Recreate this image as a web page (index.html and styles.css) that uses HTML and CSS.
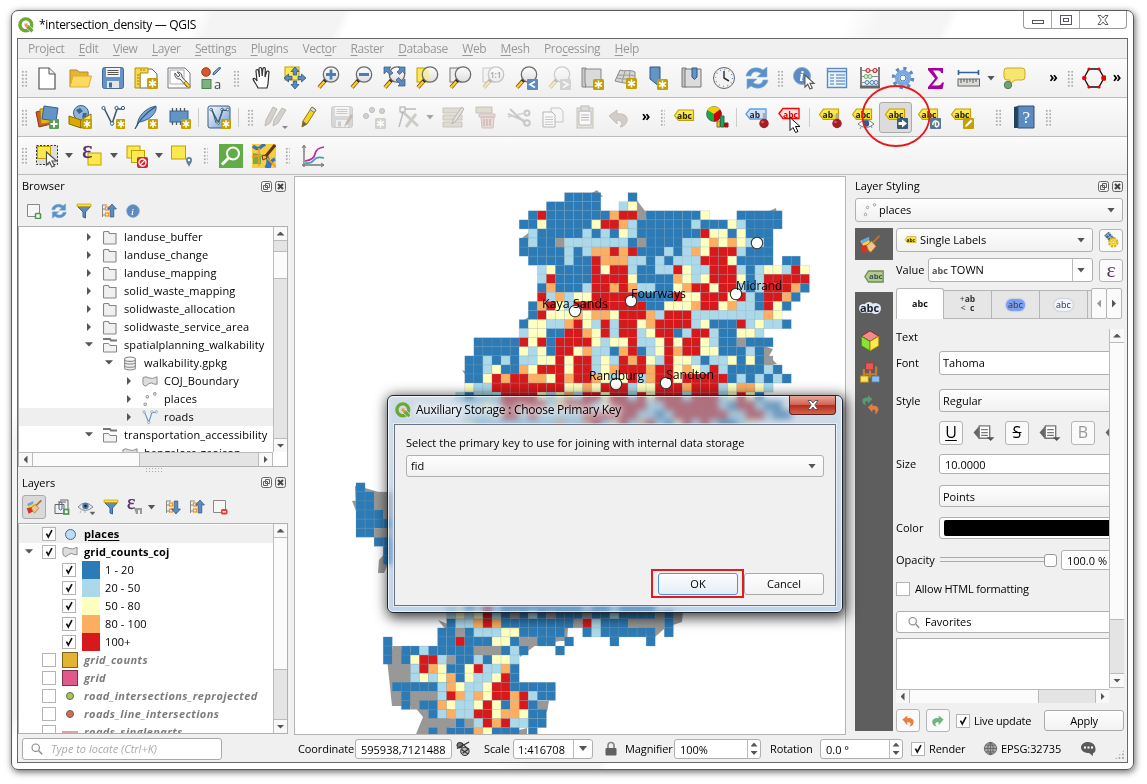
FILE: index.html
```html
<!DOCTYPE html>
<html lang="en">
<head>
<meta charset="utf-8">
<title>*intersection_density — QGIS</title>
<link rel="stylesheet" href="styles.css">
</head>
<body>
<svg class="sprite" aria-hidden="true">
<defs>
<linearGradient id="glass" x2="0" y2="1"><stop offset="0" stop-color="#fff"/><stop offset="1" stop-color="#ddd"/></linearGradient>
<linearGradient id="steel" x2="1" y2="1"><stop offset="0" stop-color="#fff"/><stop offset="1" stop-color="#6d9bcb"/></linearGradient>
<symbol id="star" viewBox="0 0 11 11"><rect width="11" height="11" rx="1.500" fill="#c4a000"/><path d="M5.500 1.500v8M2 3.500l7 4M9 3.500l-7 4" stroke="#fff" stroke-width="1.600"/></symbol>
<symbol id="q" viewBox="0 0 16 16"><circle cx="7.800" cy="7.800" r="5.900" fill="none" stroke="#6ca832" stroke-width="3.400"/><path d="M8 8h3.200l4.600 5.200-2.400 2.600L8 11z" fill="#6ca832" stroke="#fff" stroke-width=".6"/><path d="M6.500 6.500h3.200L9.200 8l1.400 1.500L9 10.500 6.600 9z" fill="#f0953c"/></symbol>
<symbol id="lens" viewBox="0 0 24 24"><path d="M9.500 14L3 21.500" stroke="#7a5500" stroke-width="4"/><path d="M8.500 15.500L3 21.500" stroke="#fccb3c" stroke-width="2.400"/><path d="M10.500 13L8.500 15.500" stroke="#222" stroke-width="3.500"/><circle cx="15" cy="8.500" r="7.700" fill="url(#glass)" stroke="#6c6c6c" stroke-width="1.300"/></symbol>
<symbol id="tag" viewBox="0 0 21 13"><path d="M1 6.500L5 1h15v10.500H5z" fill="#fce94f" stroke="#c4a000" stroke-width="1.200"/><path d="M3 7h16v4H5z" fill="#edd400" opacity=".8"/></symbol>
<symbol id="i-new" viewBox="0 0 24 24"><path d="M4 2h10l6 6v15H4z" fill="#fff" stroke="#555" stroke-width="1.200"/><path d="M14 2v6h6" fill="#eee" stroke="#555"/></symbol>
<symbol id="i-open" viewBox="0 0 24 24"><path d="M2 21V4h7l2 2h9v4" fill="#e3b536" stroke="#b88a1a"/><path d="M2 21L5 10h18.500l-3 11z" fill="#fcd960" stroke="#dcae30"/></symbol>
<symbol id="i-save" viewBox="0 0 24 24"><rect x="1.500" y="1.500" width="21" height="21" rx="2" fill="#6493c6" stroke="#476b94"/><path d="M5 2h14v9H5z" fill="#f2f2f2"/><path d="M6.500 4.500h11M6.500 6.500h11M6.500 8.500h11" stroke="#555"/><path d="M6 15h12v7H6z" fill="#e5e5e5"/><path d="M8 16.500h3v5H8z" fill="#476b94"/></symbol>
<symbol id="i-layout" viewBox="0 0 24 24"><path d="M6 3h12l5 5v14H6z" fill="#fff" stroke="#666"/><path d="M1 2h13v5H6v15H1z" fill="#f7d94d" stroke="#b5900c"/><path d="M3 9h2M3 12h2M3 15h2M3 18h2M7 3v2M10 3v2" stroke="#a07c00"/><use href="#star" x="13" y="12" width="11" height="11"/></symbol>
<symbol id="i-manager" viewBox="0 0 24 24"><path d="M1 2h17l5 5v15H1z" fill="#fff" stroke="#777"/><path d="M3 4h14v14H3z" fill="none" stroke="#aab"/><path d="M8 7a4.500 4.500 0 0 0 5 6l7 8 2-2-7-8a4.500 4.500 0 0 0-5-5l3 3-2 2z" fill="#eee" stroke="#555"/><path d="M17 17l4.500 5 2-2-4.500-5z" fill="#f5d14a" stroke="#a07c00"/></symbol>
<symbol id="i-style" viewBox="0 0 24 24"><circle cx="6" cy="6" r="4.300" fill="#d4572e" stroke="#a03a18"/><path d="M13 9l2-1 6-6-2-.5-5.500 5z" fill="#7fa8d6" stroke="#35628f"/><rect x="2" y="13.500" width="9" height="9" fill="#7fb183" stroke="#4d8052"/><text x="14" y="22.500" class="t-a">a</text></symbol>
<symbol id="i-hand" viewBox="0 0 24 24"><path d="M8 22c-1-3-4-6-5-9 1-1.500 3 0 4 2L6 5c0-2 2-2 2.500 0l1 6L9 3c0-2 2.500-2 2.700 0l.5 7 .6-7c.2-2 2.600-1.800 2.500 0L15 11l1.500-5c.6-1.700 2.800-1 2.500.6C18 12 19 17 17 22z" fill="#fff" stroke="#333" stroke-width="1.200"/></symbol>
<symbol id="i-pansel" viewBox="0 0 24 24"><rect x="2" y="1" width="14" height="13" fill="#fce94f" stroke="#c4a000"/><path d="M12 1l4 4.500h-2.300V9h-3.400V5.500H8zM12 23l4-4.500h-2.300V15h-3.400v3.500H8zM1 12l4.500-4v2.300H9v3.400H5.500V16zM23 12l-4.500-4v2.300H15v3.400h3.500V16z" fill="#5b8bc0" stroke="#2f5682" stroke-width=".8"/></symbol>
<symbol id="i-zin" viewBox="0 0 24 24"><use href="#lens" width="24" height="24"/><path d="M15 3.500v10M10 8.500h10" stroke="#4a7db3" stroke-width="2.800"/></symbol>
<symbol id="i-zout" viewBox="0 0 24 24"><use href="#lens" width="24" height="24"/><path d="M10 8.500h10" stroke="#4a7db3" stroke-width="2.800"/></symbol>
<symbol id="i-zfull" viewBox="0 0 24 24"><use href="#lens" width="24" height="24"/><path d="M2 1h7L7 3l4 4-2.500 2L4.500 5.500 2 8zM23 1h-7l2 2-3 3 2.500 2.500 3-3L23 8zM23 20h-7l2-2-4-4 2.500-2.500 4 4L23 13z" fill="#5b8bc0" stroke="#2f5682" stroke-width=".7"/></symbol>
<symbol id="i-zsel" viewBox="0 0 24 24"><rect x="2" y="2" width="12" height="14" fill="#fce94f" stroke="#c4a000"/><use href="#lens" width="24" height="24"/><path d="M9 4h5v11c-5-1-7-6-5-11z" fill="#fce94f" opacity=".45"/></symbol>
<symbol id="i-zlay" viewBox="0 0 24 24"><rect x="2" y="2" width="12" height="14" fill="#eee" stroke="#777"/><use href="#lens" width="24" height="24"/></symbol>
<symbol id="i-z11" viewBox="0 0 24 24"><g opacity=".35"><rect x="2" y="2" width="12" height="14" fill="#eee" stroke="#777"/><use href="#lens" width="24" height="24"/><text x="9" y="12" class="t-s">1:1</text></g></symbol>
<symbol id="i-zlast" viewBox="0 0 24 24"><use href="#lens" width="24" height="24"/><rect x="13" y="13" width="11" height="11" rx="1" fill="#5b8bc0"/><path d="M21 15.500l-5 3 5 3" stroke="#fff" stroke-width="1.800" fill="none"/></symbol>
<symbol id="i-znext" viewBox="0 0 24 24"><g opacity=".3"><use href="#lens" width="24" height="24"/><rect x="13" y="13" width="11" height="11" rx="1" fill="#888"/><path d="M16 15.500l5 3-5 3" stroke="#fff" stroke-width="1.800" fill="none"/></g></symbol>
<symbol id="i-map" viewBox="0 0 24 24"><path d="M2 2h4v19h-4z" fill="#c9c9c9" stroke="#888"/><path d="M5 3h16v18H5q2-2 0-4z" fill="#dadada" stroke="#888"/><use href="#star" x="13" y="13" width="11" height="11"/></symbol>
<symbol id="i-3d" viewBox="0 0 24 24"><path d="M7 4c5 2 10-1 15 2v11c-6 1-13 0-20-2z" fill="#d6d6d6" stroke="#8a8a8a"/><path d="M5 9c6 1 11-1 17 1M4 12c6 2 12 0 18 2M12 5L9 16M17 4l-1 12" stroke="#999" fill="none"/><use href="#star" x="13" y="12" width="11" height="11"/></symbol>
<symbol id="i-bm" viewBox="0 0 24 24"><path d="M4 1h10v20l-5-4-5-4z" fill="#6493c6" stroke="#2f5682"/><use href="#star" x="11" y="13" width="11" height="11"/></symbol>
<symbol id="i-bms" viewBox="0 0 24 24"><path d="M3 2h4v19H3z" fill="#c4c4c4" stroke="#777"/><path d="M6 3h16v18H6z" fill="#dcdcdc" stroke="#777"/><path d="M13 2h5v9l-2.500 2.500L13 11z" fill="#6493c6" stroke="#2f5682"/></symbol>
<symbol id="i-clock" viewBox="0 0 24 24"><circle cx="12" cy="12" r="10.500" fill="#f3f3f3" stroke="#666"/><circle cx="12" cy="12" r="8.500" fill="none" stroke="#6493c6" stroke-width="1.300" stroke-dasharray="1 3.450"/><path d="M12 5v7l5 3" stroke="#333" stroke-width="1.500" fill="none"/></symbol>
<symbol id="i-ref" viewBox="0 0 24 24"><path d="M1 10C2 3 11-1 18 4l4-3v10H12l4-3.500C12 5 7 5 6 10zM23 14c-1 7-10 11-17 6l-4 3V13h10l-4 3.500c4 2.500 9 2.500 10-2.500z" fill="#5b91c9" stroke="#82aedb" stroke-width=".6"/></symbol>
<symbol id="arrow" viewBox="0 0 13 17"><path d="M1 1v13l3-3 2.500 5 2.500-1-2.500-5H11z" fill="#fff" stroke="#555" stroke-width="1.200"/></symbol>
<symbol id="i-info" viewBox="0 0 24 24"><circle cx="10" cy="10" r="8.500" fill="#5b8bc0" stroke="#8cacd0"/><text x="7.500" y="15" class="t-i">i</text><use href="#arrow" x="12" y="8" width="12" height="16"/></symbol>
<symbol id="i-circinfo" viewBox="0 0 24 24"><circle cx="12" cy="12" r="11" fill="#5b8bc0" stroke="#8cacd0"/><text x="9" y="18" class="t-i">i</text></symbol>
<symbol id="i-table" viewBox="0 0 24 24"><rect x="2.500" y="2.500" width="19" height="19" fill="#eaf2fc" stroke="#5b8bc0" stroke-width="1.400"/><path d="M3 5.500h18" stroke="#5b8bc0" stroke-width="1.500"/><path d="M5 9h4M5 12h4M5 15h4M5 18h4M11 9h9M11 12h9M11 15h9M11 18h9" stroke="#78a3d4" stroke-width="1.500"/></symbol>
<symbol id="i-aba" viewBox="0 0 24 24"><path d="M3 1v20M21 1v20" stroke="#555" stroke-width="1.500"/><path d="M2 21h20" stroke="#666" stroke-width="3"/><path d="M3 4.500h18M3 10.500h18M3 16.500h18" stroke="#888"/><g fill="#f5d0d0" stroke="#cc3030" stroke-width="1.200"><circle cx="10" cy="4.500" r="2"/><circle cx="17" cy="4.500" r="2"/></g><g fill="#d8f0d4" stroke="#6ab06a"><circle cx="8" cy="10.500" r="2"/><circle cx="12" cy="10.500" r="2"/></g><g fill="#d6e8fa" stroke="#4a7db3"><circle cx="9" cy="16.500" r="2"/><circle cx="14" cy="16.500" r="2"/><circle cx="18" cy="16.500" r="2"/></g></symbol>
<symbol id="i-gear" viewBox="0 0 24 24"><circle cx="12" cy="12" r="9" fill="none" stroke="#5b8bc0" stroke-width="4.500" stroke-dasharray="3 4.070"/><circle cx="12" cy="12" r="5.800" fill="none" stroke="#79a9df" stroke-width="4.500"/><circle cx="12" cy="12" r="3" fill="#f4f4f4" stroke="#4a7db3"/></symbol>
<symbol id="i-sum" viewBox="0 0 24 24"><path d="M4 2h15v5h-2q0-2.500-3-2.500H9L14 12l-6 7.500h6q3 0 4-3h2L18.500 23H4v-2l7-8.500L4 4z" fill="#a8009c"/></symbol>
<symbol id="i-meas" viewBox="0 0 24 24"><path d="M1 6.500h21M1.500 4v5M21.500 4v5" stroke="#35628f" stroke-width="1.600"/><rect x="1" y="13" width="21.500" height="7" fill="#dcdcd4" stroke="#666"/><path d="M4 13v4M7 13v3M10 13v4M13 13v3M16 13v4M19 13v3" stroke="#555"/></symbol>
<symbol id="i-tip" viewBox="0 0 24 24"><path d="M5 2h15q3 0 3 3v6q0 3-3 3h-7l-6 5 1-5H5q-3 0-3-3V5q0-3 3-3z" fill="#f7e571" stroke="#cfa91e"/><circle cx="6" cy="19" r="3.700" fill="#73a077" stroke="#4d8052"/></symbol>
<symbol id="i-hex" viewBox="0 0 24 24"><path d="M7 3h10l5 9-5 9H7l-5-9z" fill="none" stroke="#111" stroke-width="1.300"/><g fill="#e00"><circle cx="7" cy="3" r="1.600"/><circle cx="17" cy="3" r="1.600"/><circle cx="22" cy="12" r="2.800"/><circle cx="17" cy="21" r="1.600"/><circle cx="7" cy="21" r="1.600"/><circle cx="2.300" cy="12" r="2.300"/></g></symbol>
<symbol id="i-src" viewBox="0 0 24 24"><path d="M1 7l12-3 3 15-12 3z" fill="#d4572e" stroke="#8b3a10"/><path d="M5 4l13-1 1 14-13 2z" fill="#e8b81a" stroke="#a98408"/><path d="M9 1l14 2-2 13-14-2z" fill="#6493c6" stroke="#35628f"/><rect x="14" y="14" width="10" height="10" rx="1" fill="#5b9c5e"/><path d="M19 15.500v7M15.500 19h7" stroke="#fff" stroke-width="1.800"/></symbol>
<symbol id="i-pkg" viewBox="0 0 24 24"><circle cx="13" cy="8" r="7.500" fill="#8fb5dd" stroke="#35628f"/><path d="M8 5l4-2 3 3-4 3zM15 8l4 0-1 4-4 1z" fill="#44648c"/><path d="M1 11l12 4v8L1 19z" fill="#d9ab00" stroke="#8a6b00"/><path d="M13 15l10-6v8l-10 6z" fill="#fce94f" stroke="#8a6b00"/><use href="#star" x="14" y="14" width="10" height="10"/></symbol>
<symbol id="i-shp" viewBox="0 0 24 24"><path d="M3 3l8 16 5-15h6" fill="none" stroke="#3b5a73" stroke-width="1.600"/><g fill="#fff" stroke="#3b5a73"><circle cx="2.500" cy="3" r="1.600"/><circle cx="15.500" cy="3" r="1.600"/><circle cx="22" cy="3" r="1.600"/><circle cx="11" cy="18.500" r="1.700"/></g></symbol>
<symbol id="i-line" viewBox="0 0 24 24"><path d="M3 3l7 17 5-16h6" fill="none" stroke="#6f95bb" stroke-width="1.800"/><g fill="#fff" stroke="#5b8bc0"><circle cx="2.500" cy="3" r="1.900"/><circle cx="15" cy="3" r="1.900"/><circle cx="22" cy="3" r="1.900"/><circle cx="10" cy="20" r="1.900"/></g></symbol>
<symbol id="i-newshp" viewBox="0 0 24 24"><use href="#i-shp" width="24" height="24"/><use href="#star" x="15" y="14" width="10" height="10"/></symbol>
<symbol id="i-feath" viewBox="0 0 24 24"><path d="M3 21C4 10 12 3 22 1c1 5-3 13-16 16" fill="#78a5d8" stroke="#35628f"/><path d="M1 24C5 15 12 8 21 2" stroke="#3b5a73" stroke-width="1.300" fill="none"/><use href="#star" x="14" y="14" width="10" height="10"/></symbol>
<symbol id="i-chip" viewBox="0 0 24 24"><path d="M5.500 3v17M9.500 3v17M13.500 3v17M17.500 3v17" stroke="#555" stroke-width="1.300"/><rect x="3" y="6" width="18" height="11" fill="#6493c6" stroke="#35628f"/><use href="#star" x="14" y="14" width="10" height="10"/></symbol>
<symbol id="i-virt" viewBox="0 0 24 24"><rect x="1" y="1" width="22" height="22" rx="2" fill="url(#steel)" stroke="#3b5a8a"/><g transform="translate(2 2) scale(.85)"><use href="#i-shp" width="24" height="24"/></g><path d="M5 4l4 14M16 4l-5 14" stroke="#3b5a73"/><use href="#star" x="14" y="14" width="10" height="10"/></symbol>
<symbol id="pen" viewBox="0 0 24 24"><path d="M5 22l1-6L15 2l4 3-9 14z" fill="#f2d52b" stroke="#947600"/><path d="M5 22l1-6 4 3z" fill="#666"/><path d="M15 2l4 3-2 2.500-4-3z" fill="#ddd" stroke="#777"/></symbol>
<symbol id="i-pens" viewBox="0 0 24 24"><g fill="#d4d0cc" stroke="#bfbbb6"><path d="M1 21l1-6L9 2l4 2-7 14z"/><path d="M9 21l1-6L18 3l4 2-8 13z"/></g><path d="M18 21h6l-3 3z" fill="#888"/></symbol>
<symbol id="i-gsave" viewBox="0 0 24 24"><g opacity=".28" filter="grayscale(1)"><use href="#i-save" width="24" height="24"/></g><path d="M14 22l2-5 5-8 2 2-5 8z" fill="#c9b8b0"/></symbol>
<symbol id="i-pts" viewBox="0 0 24 24"><g fill="#d2d2d2" stroke="#bbb"><circle cx="9" cy="5" r="2.500"/><circle cx="19" cy="6" r="2.500"/><circle cx="3" cy="11" r="2.500"/></g><rect x="12" y="13" width="11" height="11" rx="1.500" fill="#d3d1c9"/><path d="M17.500 14.500v8M14 16.500l7 4M21 16.500l-7 4" stroke="#fff" stroke-width="1.500"/></symbol>
<symbol id="i-vert" viewBox="0 0 24 24"><path d="M3 22L8 4h12M6 4v5" stroke="#bbb" stroke-width="1.400" fill="none"/><path d="M8 8l14 13M10 22L20 9" stroke="#ceccc7" stroke-width="3"/><rect x="4" y="2" width="5" height="5" fill="#f3f3f3" stroke="#aaa"/></symbol>
<symbol id="i-rows" viewBox="0 0 24 24"><path d="M2 3h19v5H2zM2 10h19v5H2zM2 17h19v5H2z" fill="#dedcd2" stroke="#c8c6bd"/><path d="M11 19l2-6 8-11 2 2-8 12z" fill="#e3e1dc" stroke="#b5b5b5"/></symbol>
<symbol id="i-trash" viewBox="0 0 24 24"><path d="M2 2h16v6H2z" fill="#dedbd0" stroke="#c5c2b8"/><path d="M5 9h16v3H5zM7 12h13l-1 11H8z" fill="#e9dad8" stroke="#d3bfbd"/><path d="M10 14v7M13 14v7M16 14v7" stroke="#cdb4b2" stroke-width="1.300"/></symbol>
<symbol id="i-cut" viewBox="0 0 24 24"><path d="M1 9l17 7M3 4l14 13" stroke="#c8c8c8" stroke-width="2"/><g fill="none" stroke="#c8c8c8" stroke-width="2"><circle cx="20" cy="8" r="2.500"/><circle cx="20" cy="18" r="2.800"/></g><path d="M1 12l17-4" stroke="#d3d3d3" stroke-width="1.500"/></symbol>
<symbol id="i-copy" viewBox="0 0 24 24"><path d="M11 3h9l3 3v11H11z" fill="#f5f5f5" stroke="#c5c5c5"/><path d="M3 7h9l3 3v12H3z" fill="#f9f9f9" stroke="#b5b5b5"/><path d="M5 12h8M5 14.500h8M5 17h8M5 19.500h8" stroke="#c5c5c5"/></symbol>
<symbol id="i-paste" viewBox="0 0 24 24"><rect x="4" y="3" width="16" height="20" fill="#e4e2da" stroke="#c5c3ba"/><path d="M6 6h12v14H6z" fill="#fafafa" stroke="#bbb"/><path d="M8 10h8M8 12.500h8M8 15h8" stroke="#b5b5b5"/><rect x="8" y="1" width="8" height="5" fill="#ddd" stroke="#bbb"/></symbol>
<symbol id="i-undo" viewBox="0 0 24 24"><path d="M3 11l8-6v4c8-1 11 3 10 7s-5 6-7 6c3-3 2-7-3-7v4z" fill="#d3cdc8" stroke="#c5bfba"/></symbol>
<symbol id="i-abc" viewBox="0 0 24 24"><use href="#tag" x="1" y="4" width="22" height="13"/><text x="5" y="14" class="t-abc">abc</text></symbol>
<symbol id="i-pie" viewBox="0 0 24 24"><circle cx="9" cy="9" r="7.500" fill="#0fae4b" stroke="#333" stroke-width=".5"/><path d="M9 9L2.500 5A7.500 7.500 0 0 1 15 4.500z" fill="#fcc900"/><path d="M9 9l6-4.500a7.500 7.500 0 0 1-6 12z" fill="#cc0000"/><path d="M12 16h3v6h-3z" fill="#fcc900" stroke="#765"/><path d="M15.500 11h3.500v11h-3.500z" fill="#0fae4b" stroke="#365"/><path d="M19.500 18h3.500v4h-3.500z" fill="#c00" stroke="#822"/></symbol>
<symbol id="pin" viewBox="0 0 12 18"><path d="M6 2v9" stroke="#aaa" stroke-width="2.500"/><circle cx="6" cy="12.500" r="4.700" fill="#a61d24"/><circle cx="4.500" cy="11" r="1.300" fill="#c9666a"/></symbol>
<symbol id="i-abpin" viewBox="0 0 24 24"><path d="M1 9l4-5h16v10H5z" fill="#cfe2fa" stroke="#63a0e4" stroke-width="1.400"/><text x="4.500" y="12.500" class="t-abc">ab</text><use href="#pin" x="13" y="6" width="12" height="18"/></symbol>
<symbol id="i-abcred" viewBox="0 0 24 24"><path d="M1 8.500l4-5h16v10H5z" fill="#ffe3e3" stroke="#f00" stroke-width="1.400"/><text x="5" y="12.500" class="t-abc red">abc</text></symbol>
<symbol id="i-ypin" viewBox="0 0 24 24"><use href="#tag" y="3" width="22" height="13"/><text x="4.500" y="12.500" class="t-abc">ab</text><use href="#pin" x="13" y="6" width="12" height="18"/></symbol>
<symbol id="i-yeye" viewBox="0 0 24 24"><use href="#tag" y="3" width="22" height="13"/><text x="4.500" y="12.500" class="t-abc">abc</text><path d="M7 19q8-8 16 0-8 7-16 0z" fill="#fff" stroke="#777"/><circle cx="15" cy="18.500" r="3.200" fill="#2a5d93"/><path d="M10 22l-1 2M15 22v2M20 21l1 2" stroke="#888"/></symbol>
<symbol id="i-ymove" viewBox="0 0 24 24"><use href="#tag" y="3" width="22" height="13"/><text x="4.500" y="12.500" class="t-abc">abc</text><rect x="13" y="13" width="11" height="11" rx="1" fill="#3b5a73"/><path d="M14.500 17h3.500v-2.500l5 4-5 4V20h-3.500z" fill="#fff"/></symbol>
<symbol id="i-yrot" viewBox="0 0 24 24"><use href="#tag" y="3" width="22" height="13"/><text x="4.500" y="12.500" class="t-abc">abc</text><rect x="13" y="13" width="11" height="11" rx="1" fill="#57798f"/><path d="M16 20a3 3 0 1 1 3 2M18.500 17v5" stroke="#fff" stroke-width="1.500" fill="none"/></symbol>
<symbol id="i-yedit" viewBox="0 0 24 24"><use href="#tag" y="3" width="22" height="13"/><text x="4.500" y="12.500" class="t-abc">abc</text><rect x="13" y="13" width="11" height="11" rx="1" fill="#c4a000"/><path d="M15 22l1-2.500 5-5 1.500 1.500-5 5z" fill="#fff"/></symbol>
<symbol id="i-help" viewBox="0 0 24 24"><path d="M2 2l4-1v22H2z" fill="#23425e"/><path d="M6 1h16v22H6z" fill="#5b8bc0" stroke="#35506e"/><text x="10.500" y="17.500" class="t-help">?</text></symbol>
<symbol id="i-sel" viewBox="0 0 24 24"><rect x="1.500" y="1.500" width="21" height="19" fill="#ddd" stroke="#333" stroke-dasharray="2 1.500"/><rect x="2.500" y="2.500" width="13" height="12" fill="#fce94f" stroke="#c4a000"/><use href="#arrow" x="10" y="7" width="14" height="17"/></symbol>
<symbol id="i-eps" viewBox="0 0 24 24"><rect x="8" y="9" width="13" height="12" fill="#fce94f" stroke="#c4a000"/><text x="2" y="14" class="t-eps">ε</text></symbol>
<symbol id="i-desel" viewBox="0 0 24 24"><rect x="2" y="2" width="13" height="12" fill="#fce94f" stroke="#c4a000"/><rect x="6.500" y="6.500" width="13" height="12" fill="#fce94f" stroke="#c4a000"/><rect x="12" y="13" width="11" height="11" rx="2" fill="#d8232a"/><circle cx="17.500" cy="18.500" r="3.500" fill="none" stroke="#fff" stroke-width="1.300"/><path d="M15 21l5-5" stroke="#fff" stroke-width="1.300"/></symbol>
<symbol id="i-selpin" viewBox="0 0 24 24"><rect x="1.500" y="2" width="14" height="13" fill="#fce94f" stroke="#c4a000"/><path d="M19 23c-1-3-3-4-3-7a3 3 0 0 1 6 0c0 3-2 4-3 7z" fill="#5e8299"/><circle cx="19" cy="16" r="1.200" fill="#fff"/></symbol>
<symbol id="i-gsearch" viewBox="0 0 24 24"><rect width="24" height="24" fill="#62ac46"/><circle cx="14" cy="9.500" r="6" fill="none" stroke="#fff" stroke-width="2"/><path d="M9.500 14L3 20.500" stroke="#fff" stroke-width="3"/></symbol>
<symbol id="i-osm" viewBox="0 0 24 24"><rect width="24" height="24" fill="#f4d03f"/><path d="M1 9l8 1v10H1z" fill="#76ad49"/><path d="M1 2q5 5 9 0l3-2M13 11q6 5 1 13M17 24q1-7 6-9" stroke="#3775bc" stroke-width="3.500" fill="none"/><path d="M0 13l12-2 12 12M7 4v18" stroke="#f59b22" stroke-width="1.600" fill="none"/><path d="M10 12q4-2 5 2l-4 2z" fill="#e8b94a" stroke="#6b3410"/><path d="M14 12l9-11" stroke="#6b3410" stroke-width="3"/></symbol>
<symbol id="i-plot" viewBox="0 0 24 24"><path d="M3 1v22M1 21h22" stroke="#777" stroke-width="1.400"/><path d="M1 4l2-3 2 3M20 19l3 2-3 2" fill="none" stroke="#777"/><path d="M4 17q9-1 10-7t9-7" fill="none" stroke="#bb2a9a" stroke-width="1.700"/><path d="M4 19q6 1 9-3t10-2" fill="none" stroke="#4a9bb5" stroke-width="1.700"/></symbol>
<symbol id="i-add" viewBox="0 0 16 16"><path d="M1.500 1.500h12v12h-12z" fill="#f6f6f6" stroke="#888"/><rect x="9.500" y="10.500" width="5" height="5" rx="1" fill="#fff" stroke="#4d9456" stroke-width="1.600"/></symbol>
<symbol id="i-rem" viewBox="0 0 16 16"><path d="M1.500 1.500h12v12h-12z" fill="#f6f6f6" stroke="#888"/><rect x="9" y="10" width="6.500" height="5.500" rx="1.500" fill="#e8393d"/><path d="M10.500 12.800h3.500" stroke="#fff" stroke-width="1.300"/></symbol>
<symbol id="i-funnel" viewBox="0 0 16 16"><path d="M1 3h14l-5.500 6v6L7 14V9z" fill="#5b8bc0" stroke="#3a648f"/><path d="M1 1h14v2.500H1z" fill="#f7e044" stroke="#c4a000" stroke-width=".7"/></symbol>
<symbol id="i-tree" viewBox="0 0 16 16"><path d="M1 2h5M1.500 2v12M2 6h3M2 12h3" stroke="#888" fill="none"/><rect x="4.500" y="4" width="3" height="3" fill="#fff" stroke="#f29222" stroke-width="1.300"/><rect x="4.500" y="10" width="3" height="3" fill="#fff" stroke="#f29222" stroke-width="1.300"/></symbol>
<symbol id="i-up" viewBox="0 0 16 16"><use href="#i-tree" width="16" height="16"/><path d="M11 1l4.500 5h-2.700v8H9.200V6H6.500z" fill="#5b8bc0" stroke="#2f5682" stroke-width=".7"/></symbol>
<symbol id="i-down" viewBox="0 0 16 16"><use href="#i-tree" width="16" height="16"/><path d="M11 15l4.500-5h-2.700V2H9.200v8H6.500z" fill="#5b8bc0" stroke="#2f5682" stroke-width=".7"/></symbol>
<symbol id="i-grp" viewBox="0 0 16 16"><path d="M6 1h8v10M4 3h8M1 5.500h9v9H1z" stroke="#666" fill="none"/><path d="M5 10V4q2-2 3 0v6q-1.500 2-3 0z" fill="none" stroke="#44698a"/><rect x="10" y="10.500" width="4.500" height="4.500" fill="#fff" stroke="#4d9456" stroke-width="1.700"/></symbol>
<symbol id="i-eye" viewBox="0 0 18 16"><path d="M1 8q7-8 15 0-8 7-15 0z" fill="#e4e9ee" stroke="#888"/><circle cx="8.500" cy="7" r="3.200" fill="#4b7aa8"/><circle cx="8.500" cy="7" r="1.300" fill="#123"/><path d="M4 12l-1 2M8 12v2M13 13h5l-2.500 3z" fill="#555" stroke="#888" stroke-width=".6"/></symbol>
<symbol id="i-ef" viewBox="0 0 18 16"><text x="1" y="10" class="t-eps sm">ε</text><path d="M8 9h8v6h-2v-4h-2v4h-2z" fill="#999"/></symbol>
<symbol id="i-brush" viewBox="0 0 24 24"><path d="M1 8l9-3 3 6-5 9z" fill="#f7d43c"/><path d="M2 7l9-4v4l-8 4z" fill="#6aa7e0"/><path d="M1 14l8-2 3 6-8 4z" fill="#d8332a"/><path d="M8 13l6-5 5 6-6 7q-4-2-5-8z" fill="#f0c48a" stroke="#9c6a2a"/><path d="M15 10l8-8" stroke="#b5722a" stroke-width="2.500"/></symbol>
<symbol id="i-folder" viewBox="0 0 16 15"><path d="M1.500 13.500v-11q0-1 1-1h4l1 2h6.500v10q0 .5-1 .5H2.500q-1 0-1-.5z" fill="#f0f0f0" stroke="#858585" stroke-width="1.100"/></symbol>
<symbol id="i-fopen" viewBox="0 0 16 15"><path d="M1 1h7l1 1.500h6" stroke="#777" stroke-width="2" fill="none"/><path d="M1.500 14V5.500h5l1.500 2h6.500V14z" fill="#f2f2f2" stroke="#858585"/></symbol>
<symbol id="i-db" viewBox="0 0 14 14"><path d="M2 3v8.500c0 2 10 2 10 0V3" fill="#eee" stroke="#888"/><ellipse cx="7" cy="3" rx="5" ry="2" fill="#f6f6f6" stroke="#888"/><path d="M2 6c0 2 10 2 10 0M2 9c0 2 10 2 10 0" fill="none" stroke="#888"/></symbol>
<symbol id="i-poly" viewBox="0 0 17 12"><path d="M1 2q3-2 6 0 4 2 9-1v8q-4 0-6-1.500Q7 8 4 11 1 10 1 8z" fill="#ddd" stroke="#888"/></symbol>
<symbol id="i-pt" viewBox="0 0 14 14"><g fill="#fff" stroke="#999"><circle cx="2.500" cy="11.500" r="1.200"/><circle cx="4.500" cy="4.500" r="1.200"/><circle cx="11.500" cy="1.800" r="1.200"/></g></symbol>
<symbol id="i-set" viewBox="0 0 24 24"><path d="M3 6l6-5 8 9-6 5z" fill="#44698a"/><path d="M6 3l8 9M3 8l9-6M6 11l8-6" stroke="#b4cde8"/><circle cx="15" cy="15" r="5.500" fill="#fce03a" stroke="#d8b52a" stroke-width="3" stroke-dasharray="3 1.300"/><circle cx="15" cy="15" r="1.800" fill="#fff" stroke="#c9a21b"/></symbol>
<symbol id="i-cube" viewBox="0 0 24 24"><path d="M2 7l10-6 10 6-10 6z" fill="#f28b8b" stroke="#a31b1b"/><path d="M2 7l10 6v11L2 18z" fill="#8ae234" stroke="#3a7a0c"/><path d="M22 7l-10 6v11l10-6z" fill="#fce94f" stroke="#a98408"/></symbol>
<symbol id="i-brs" viewBox="0 0 24 24"><path d="M5 8v8M12 8v10M19 5v12M5 14h14" stroke="#c47f2c" stroke-width="2.500" fill="none"/><rect x="7" y="1" width="9" height="8" fill="#e85757" stroke="#a83232"/><rect x="1" y="16" width="9" height="7" fill="#fce060" stroke="#b59020"/><rect x="14" y="16" width="9" height="7" fill="#8dbcf0" stroke="#44739f"/></symbol>
<symbol id="i-curl" viewBox="0 0 20 20"><path d="M2 8l7-6v4c7-1 10 3 9 7s-4 5-6 5c3-3 2-7-3-6v4z"/></symbol>
<symbol id="i-data" viewBox="0 0 24 20"><path d="M1 9l6-7v14z" fill="#666"/><path d="M7 2h11v13H7zM9 6h7M9 9h7M9 12h7" fill="#fff" stroke="#777" stroke-width="1.400"/><path d="M15 14h8l-4 4z" fill="#555"/></symbol>
<symbol id="i-mag" viewBox="0 0 14 14"><circle cx="5.500" cy="5.500" r="4.300" fill="none" stroke="#888" stroke-width="1.300"/><path d="M9 9l4 4" stroke="#888" stroke-width="1.600"/></symbol>
<symbol id="i-check" viewBox="0 0 14 14"><path d="M4 6.500l2.200 4L10.500 2.500" fill="none" stroke="#111" stroke-width="1.900"/></symbol>
<symbol id="i-float" viewBox="0 0 11 11"><rect x=".5" y=".5" width="10" height="10" rx="2" fill="#f6f6f6" stroke="#666"/><path d="M4.500 2.500h4v4h-4zM2.500 4.500h4v4h-4z" fill="#eee" stroke="#555" stroke-width=".9"/></symbol>
<symbol id="i-close" viewBox="0 0 11 11"><rect x=".5" y=".5" width="10" height="10" rx="2" fill="#eee" stroke="#666"/><path d="M3 3l5 5M8 3L3 8" stroke="#444" stroke-width="2"/></symbol>
<symbol id="i-lock" viewBox="0 0 12 15"><path d="M3 7V4.500q0-3 3-3t3 3V7" fill="none" stroke="#888" stroke-width="1.700"/><rect x=".5" y="7" width="11" height="7.500" rx="1" fill="#606060"/></symbol>
<symbol id="i-globe" viewBox="0 0 16 16"><circle cx="8" cy="8" r="6.500" fill="#aaa" stroke="#666"/><path d="M1 8h14M8 1v14M3 4.500h10M3 11.500h10M8 1q-6 7 0 14M8 1q6 7 0 14" fill="none" stroke="#666"/></symbol>
<symbol id="i-chat" viewBox="0 0 17 16"><path d="M8 1c9 0 9 11 5 11v3l-4-3C-2 12-1 1 8 1z" fill="#5a5a5a"/><path d="M4 6.500h2M7.500 6.500h2M11 6.500h2" stroke="#fff" stroke-width="2"/></symbol>
<symbol id="i-bug" viewBox="0 0 16 16"><circle cx="4" cy="4.500" r="3" fill="#777" stroke="#222"/><circle cx="9.500" cy="11" r="4.500" fill="#bbb" stroke="#222"/><path d="M1 8l13-7M6 9l7 5M6 2l7 7M7 13l7-5" stroke="#333" stroke-width="1.300"/></symbol>
<symbol id="i-x" viewBox="0 0 12 10"><path d="M1 .5h3l2 2.500L8 .5h3L7.800 5 11 9.500H8L6 7 4 9.500H1L4.200 5z" fill="#fff" stroke="#5a5a66"/></symbol>
</defs>
</svg>

<div class="window">
  <header class="titlebar">
    <svg class="logo"><use href="#q"/></svg><span class="title">*intersection_density — QGIS</span>
    <div class="winbtns"><span><i class="min"></i></span><span><i class="max"></i></span><span><svg class="x"><use href="#i-x"/></svg></span></div>
  </header>
  <main class="client">
    <nav class="menu"><span>Pro<u>j</u>ect</span><span><u>E</u>dit</span><span><u>V</u>iew</span><span><u>L</u>ayer</span><span><u>S</u>ettings</span><span><u>P</u>lugins</span><span>Vect<u>o</u>r</span><span><u>R</u>aster</span><span><u>D</u>atabase</span><span><u>W</u>eb</span><span><u>M</u>esh</span><span>Pro<u>c</u>essing</span><span><u>H</u>elp</span></nav>
    <div class="toolbar" data-tools="g new open save layout manager style g hand pansel zin zout zfull zsel zlay z11 zlast znext map 3d bm bms clock ref g2 info table aba gear sum meas v tip m1 g2 hex m2"></div>
    <div class="toolbar" data-tools="g src pkg newshp feath chip s virt s g pens PEN gsave pts vert V rows trash cut copy paste undo m3 g3 abc pie s abpin abcred s ypin yeye *ymove yrot yedit g4 help g"></div>
    <div class="toolbar last" data-tools="g sel v eps v desel v selpin g5 gsearch osm g5 plot"></div>

    <section class="work">
      <aside class="left">
        <div class="dockhead"><span>Browser</span><svg><use href="#i-float"/></svg><svg><use href="#i-close"/></svg></div>
        <div class="mini"><svg><use href="#i-add"/></svg><svg><use href="#i-ref"/></svg><svg><use href="#i-funnel"/></svg><svg><use href="#i-up"/></svg><svg class="s14"><use href="#i-circinfo"/></svg></div>
        <div class="box browser">
          <div class="view"><ul id="browser" class="tree"></ul></div>
          <div class="vsb"><i class="btn up"></i><i class="gap" style="height:10px"></i><i class="thumb" style="height:28px"></i><i class="gap grow"></i><i class="btn dn"></i></div>
          <div class="hsb"><i class="btn lf"></i><i class="thumb" style="width:107px"></i><i class="gap grow"></i><i class="btn rt"></i></div>
        </div>
        <div class="split"></div>
        <div class="dockhead lay"><span>Layers</span><svg><use href="#i-float"/></svg><svg><use href="#i-close"/></svg></div>
        <div class="mini laytools"><b class="pressed"><svg><use href="#i-brush"/></svg></b><svg><use href="#i-grp"/></svg><svg class="w18"><use href="#i-eye"/></svg><svg><use href="#i-funnel"/></svg><svg class="w18 ef"><use href="#i-ef"/></svg><i class="car"></i><svg><use href="#i-down"/></svg><svg><use href="#i-up"/></svg><svg><use href="#i-rem"/></svg></div>
        <div class="box layers">
          <div class="view"><ul id="layers" class="tree"></ul></div>
          <div class="vsb"><i class="btn up"></i><i class="thumb" style="height:132px"></i><i class="gap grow"></i><i class="btn dn"></i></div>
        </div>
      </aside>

      <div class="mapwrap"><svg id="map" class="map" viewBox="295 177 550 557"></svg></div>

      <aside class="right">
        <div class="dockhead"><span>Layer Styling</span><svg><use href="#i-float"/></svg><svg><use href="#i-close"/></svg></div>
        <div class="combo layer"><svg class="pt"><use href="#i-pt"/></svg><span>places</span><i class="car"></i></div>
        <div class="styling">
          <div class="tabs">
            <b><svg><use href="#i-brush"/></svg></b>
            <b class="on"><svg viewBox="0 0 24 16"><path d="M2 8l4-6h16v12H6z" fill="#b4c991" stroke="#6d8c50" stroke-width="1.400"/><text x="6.500" y="11" class="t-abc dim">abc</text></svg></b>
            <b><svg viewBox="0 0 24 16"><g fill="#dde8fa"><circle cx="5" cy="8" r="5"/><circle cx="11" cy="7" r="6"/><circle cx="18" cy="8" r="6"/></g><text x="1" y="12" class="t-abc big">abc</text></svg></b>
            <b><svg><use href="#i-cube"/></svg></b><b><svg><use href="#i-brs"/></svg></b>
            <b><svg viewBox="0 0 24 24"><use href="#i-curl" x="-16" y="0" width="14" height="14" fill="#5c9a75" transform="scale(-1 1)"/><use href="#i-curl" x="8" y="9" width="15" height="15" fill="#e87c3e"/></svg></b>
          </div>
          <div class="pane">
            <div class="line"><div class="combo single"><svg class="tg" viewBox="0 0 24 18"><use href="#i-abc" y="-1" width="24" height="22"/></svg><span>Single Labels</span><i class="car"></i></div><b class="sq"><svg><use href="#i-set"/></svg></b></div>
            <div class="line l2"><label>Value</label><div class="combo value"><em>abc</em><span>TOWN</span><i class="car"></i></div><b class="sq eps">ε</b></div>
            <div class="ftabs"><b class="on">abc</b><b class="two"><q>+<strong>ab</strong></q><q>&lt; <strong>&nbsp;c</strong></q></b><b class="blue"><q>abc</q></b><b class="halo"><q>abc</q></b><b class="cut"></b><i class="sc lf"></i><i class="sc rt"></i></div>
            <div class="scroll">
              <div class="form">
                <div class="r text"><label>Text</label></div>
                <div class="r font"><label>Font</label><span class="inp">Tahoma</span></div>
                <div class="r style"><label>Style</label><span class="inp gr">Regular</span></div>
                <div class="r btns"><b><u>U</u></b><svg><use href="#i-data"/></svg><b><s>S</s></b><svg><use href="#i-data"/></svg><b class="dis">B</b><svg class="last"><use href="#i-data"/></svg></div>
                <div class="r size"><label>Size</label><span class="inp">10.0000</span></div>
                <div class="r pts"><label></label><span class="inp gr">Points</span></div>
                <div class="r color"><label>Color</label><span class="inp"><i></i></span></div>
                <div class="r opac"><label>Opacity</label><span class="slider"><i></i></span><span class="inp pct">100.0 %</span></div>
                <div class="r html"><i class="cb"></i><span>Allow HTML formatting</span></div>
                <div class="fav"><svg><use href="#i-mag"/></svg>Favorites</div>
                <div class="list"></div>
                <div class="hsb"><i class="btn lf"></i><i class="thumb" style="width:129px"></i><i class="gap grow"></i><i class="btn rt"></i></div>
              </div>
              <div class="vsb"><i class="btn up"></i><i class="thumb" style="height:277px"></i><i class="gap grow"></i><i class="btn dn"></i></div>
            </div>
            <div class="actions"><b class="sq"><svg fill="#e8813e"><use href="#i-curl"/></svg></b><b class="sq flip"><svg fill="#6fb682"><use href="#i-curl"/></svg></b><i class="cb"><svg><use href="#i-check"/></svg></i><span>Live update</span><b class="apply">Apply</b></div>
          </div>
        </div>
      </aside>
    </section>

    <footer class="status">
      <div class="locate"><svg><use href="#i-mag"/></svg>Type to locate (Ctrl+K)</div>
      <label class="co">Coordinate</label><span class="field coord">595938,7121488</span><svg class="bug"><use href="#i-bug"/></svg>
      <label class="sc-l">Scale</label><span class="field scale">1:416708<i><i class="car"></i></i></span><svg class="lock"><use href="#i-lock"/></svg>
      <label class="mg">Magnifier</label><span class="field magn">100%<i class="spin"></i></span>
      <label class="ro">Rotation</label><span class="field rot">0.0 °<i class="spin"></i></span>
      <i class="cb"><svg><use href="#i-check"/></svg></i><label class="re">Render</label><svg class="globe"><use href="#i-globe"/></svg><label class="ep">EPSG:32735</label><svg class="chat"><use href="#i-chat"/></svg><i class="sizegrip"></i>
    </footer>
  </main>
</div>

<div class="dialog">
  <div class="dtitle"><svg><use href="#q"/></svg><span>Auxiliary Storage : Choose Primary Key</span><b class="close"><svg><use href="#i-x"/></svg></b></div>
  <div class="dbody">
    <p>Select the primary key to use for joining with internal data storage</p>
    <div class="combo"><span>fid</span><i class="car"></i></div>
    <div class="dbtns"><div class="mark"><b class="ok">OK</b></div><b class="cancel">Cancel</b></div>
  </div>
</div>
<svg class="ring" viewBox="0 0 72 64"><ellipse cx="36" cy="32" rx="33.500" ry="30" fill="none" stroke="#e8191c" stroke-width="1.800"/></svg>
<svg class="cursor" viewBox="0 0 13 17"><path d="M1 1v13l3-3 2.500 5 2.500-1-2.500-5H11z" fill="#fff" stroke="#111"/></svg>
<script src="app.js"></script>
</body>
</html>
```

FILE: styles.css
```css
* { box-sizing: border-box; }
body { margin: 0; width: 1147px; height: 784px; overflow: hidden; background: #fff; font: 11px/18px "Open Sans", "Noto Sans", sans-serif; color: #000; position: relative; }
b, i, em, q { font-style: normal; font-weight: normal; }
q::before, q::after { content: none; }
u { text-underline-offset: 2px; }
ul { margin: 0; padding: 0; list-style: none; }
svg { display: block; flex: none; overflow: visible; }
.sprite { position: absolute; width: 0; height: 0; }
.t-a { font: 13px "Open Sans"; fill: #444; }
.t-s { font: bold 8px "Open Sans"; fill: #333; }
.t-i { font: italic bold 15px "Liberation Serif"; fill: #fff; }
.t-abc { font: bold 8.500px "Open Sans"; fill: #222; }
.t-abc.red { fill: #d00; }
.t-abc.dim { fill: #355; }
.t-abc.big { font-size: 12px; }
.t-help { font: 17px "Liberation Serif"; fill: #fff; }
.t-eps { font: 25px "Liberation Serif"; fill: #5a3263; stroke: #5a3263; stroke-width: .4; }
.t-eps.sm { font-size: 20px; }

.window { width: 1123px; height: 760px; margin: 10px 0 0 11px; border: 1px solid #5a5a5a; border-radius: 7px; box-shadow: 1px 2px 7px rgba(0,0,0,.6); background: linear-gradient(115deg, #fff 0 170px, #f4f4f4 185px 300px, #fff 310px 760px, #f5f5f5 790px 850px, #fff 860px); padding: 0 6px 0 5px; position: absolute; overflow: hidden; }
.titlebar { height: 27px; display: flex; align-items: center; font-size: 12px; padding-left: 1px; }
.logo { width: 16px; height: 16px; margin-right: 5px; }
.title { letter-spacing: -.28px; }
.winbtns { margin-left: auto; align-self: flex-start; display: flex; height: 18px; border: 1px solid #999; border-top: 0; border-radius: 0 0 4px 4px; }
.winbtns span { width: 28px; display: grid; place-items: center; border-right: 1px solid #aaa; }
.winbtns span:last-child { width: 46px; border: 0; }
.min { width: 12px; height: 4px; border: 1px solid #556; margin-top: 4px; }
.max { width: 12px; height: 10px; border: 1px solid #556; background: #fff; box-shadow: inset 0 0 0 2px #fff, inset 0 0 0 3px #556; }
.x { width: 12px; height: 10px; }
.client { border: 1px solid #696969; height: 725px; background: #f0f0f0; display: flex; flex-direction: column; margin-right: -1px; }
.menu { height: 20px; flex: none; display: flex; gap: 14.400px; padding-left: 10px; color: #989898; font-size: 12px; line-height: 20px; letter-spacing: -.4px; border-bottom: 1px solid #d0d0d0; }
.toolbar { height: 39px; flex: none; display: flex; align-items: center; border-bottom: 1px solid #bcbcbc; background: linear-gradient(#fbfbfb, #efefef); padding-left: 1px; }
.toolbar.last { height: 38px; }
.tool { width: 33px; height: 33px; display: grid; place-items: center; flex: none; }
.tool svg { width: 24px; height: 24px; }
.tool.on { border: 1px solid #aaa; border-radius: 3px; background: #dcdcdc; height: 31px; }
.grip { width: 17px; height: 17px; flex: none; background: radial-gradient(circle, #aaa 0 .7px, transparent .9px) 0 0/3.500px 3.500px content-box; padding: 0 6px 0 5px; }
.toolbar .grip:first-child { width: 11px; padding: 0 3px 0 2px; }
.sep { width: 7px; height: 19px; flex: none; background: linear-gradient(90deg, transparent 3px, #ccc 3px 4px, transparent 4px); }
.grip.g2 { width: 14px; padding: 0 4px; }
.grip.g3 { width: 9px; padding: 0 2px; }
.grip.g4 { margin-left: 12px; width: 17px; }
.grip.g5 { width: 16px; }
.v { width: 12px; flex: none; display: grid; place-items: center; }
.car, .v::after { content: ""; width: 8px; height: 5px; background: #555; clip-path: polygon(0 0, 100% 0, 50% 100%); flex: none; }
.v.dim::after { opacity: .5; }
.more { font: bold 14px/20px "Open Sans"; text-align: center; padding-bottom: 3px; flex: none; }

.work { flex: 1; min-height: 0; display: flex; }
.left { width: 276px; flex: none; }
.dockhead { display: flex; align-items: center; height: 22px; padding: 0 8px 0 4px; gap: 3px; }
.dockhead span { flex: 1; }
.dockhead svg { width: 11px; height: 11px; }
.mini { height: 29px; display: flex; align-items: center; gap: 9px; padding: 0 0 2px 8px; }
.mini svg { width: 16px; height: 16px; }
.mini svg.s14 { width: 14px; height: 14px; }
.mini svg.w18 { width: 18px; }
.pressed { width: 24px; height: 24px; border: 1px solid #aaa; border-radius: 3px; background: #d9d9d9; display: grid; place-items: center; }
.laytools { padding-left: 4px; gap: 7.500px; height: 30px; }
.laytools .ef { margin-right: -4px; }
.laytools .car { margin-right: 2px; }
.box { width: 270px; border: 1px solid #b0b0b0; background: #fff; display: grid; grid-template-columns: 1fr 14px; }
.browser { height: 241px; grid-template-rows: 1fr 14px; }
.browser .hsb { border-right: 1px solid #bbb; }
.layers { height: 211px; }
.view { overflow: hidden; min-height: 0; padding-top: 1px; }
.tree li { height: 18px; display: flex; align-items: center; white-space: nowrap; letter-spacing: .13px; }
.tree li.hl { background: #efefef; }
.tree .ex { width: 8px; height: 8px; flex: none; }
.ex.c { background: #555; clip-path: polygon(25% 0, 75% 50%, 25% 100%); }
.ex.o { background: #555; clip-path: polygon(0 15%, 100% 15%, 50% 70%); }
.tree svg.ic { width: 16px; height: 15px; margin: 0 6px 0 9px; }
.tree .cb { margin-right: 6px; }
.tree .sw { width: 18px; height: 18px; margin-right: 5px; flex: none; }
.tree .sw.b { width: 16px; height: 16px; border: 1px solid rgba(0,0,0,.45); margin-right: 6px; }
.tree .dot { width: 8px; height: 8px; border: 1px solid #567; border-radius: 50%; margin: 0 10px 0 4px; flex: none; }
.tree .dot.l { width: 11px; height: 11px; margin: 0 8px 0 3px; }
.tree .ln { width: 16px; height: 2px; background: #dba5a5; margin-right: 6px; }
.bold { font-weight: bold; }
.off { font-weight: bold; font-style: italic; color: #7c7c7c; letter-spacing: .42px; }
.cb { width: 14px; height: 14px; border: 1px solid #b4b4b4; background: #fff; flex: none; display: block; }
.cb svg { width: 12px; height: 12px; }
.vsb { display: flex; flex-direction: column; border-left: 1px solid #bbb; background: #e4e4e4; min-height: 0; }
.hsb { display: flex; border-top: 1px solid #bbb; background: #e4e4e4; }
.vsb .btn { height: 14px; } .hsb .btn { width: 14px; }
.btn { background: #f8f8f8; flex: none; display: grid; place-items: center; }
.vsb .up { border-bottom: 1px solid #bbb; } .vsb .dn { border-top: 1px solid #bbb; }
.hsb .lf { border-right: 1px solid #bbb; } .hsb .rt { border-left: 1px solid #bbb; }
.btn::after, .sc::after { content: ""; background: #555; width: 8px; height: 4px; }
.up::after { clip-path: polygon(0 100%, 50% 0, 100% 100%); }
.dn::after { clip-path: polygon(0 0, 100% 0, 50% 100%); }
.lf::after, .rt::after { width: 4px; height: 8px; }
.lf::after { clip-path: polygon(100% 0, 100% 100%, 0 50%); }
.rt::after { clip-path: polygon(0 0, 100% 50%, 0 100%); }
.thumb { background: #fbfbfb; flex: none; }
.vsb .thumb { border-bottom: 1px solid #bbb; } .vsb .gap + .thumb { border-top: 1px solid #bbb; }
.hsb .thumb { border-right: 1px solid #bbb; }
.grow { flex: 1; }
.split { width: 18px; height: 5px; margin-left: 127px; background: radial-gradient(circle, #aaa 0 .7px, transparent .9px) 0 0/3px 3px; }
.lay { height: 21px; }
.mapwrap { width: 552px; height: 559px; flex: none; border: 1px solid #b5b5b5; background: #fff; margin-top: 1px; }
.map { width: 550px; height: 557px; overflow: hidden; }
.map text { font: 12px "Open Sans"; }

.right { flex: 1; padding: 0 0 0 9px; }
.right .dockhead { padding: 0 4px 0 0; }
.combo { display: flex; align-items: center; border: 1px solid #b0b0b0; border-radius: 3px; background: linear-gradient(#fefefe, #f1f1f1); }
.combo span { flex: 1; }
.layer { width: 268px; height: 24px; padding: 0 7px 0 7px; margin-top: 1px; }
.pt { width: 14px; height: 14px; margin-right: 2px; }
.styling { display: flex; margin-top: 6px; }
.tabs { width: 38px; height: 503px; background: #5e5e5e; }
.tabs b { height: 32px; display: grid; place-items: center; padding-right: 8px; }
.tabs b.on { background: #f0f0f0; padding: 0; }
.tabs svg { width: 22px; height: 21px; }
.pane { width: 228px; margin-left: 3px; }
.line { display: flex; height: 24px; align-items: center; }
.l2 { margin-top: 6px; }
.single { width: 197px; height: 24px; padding: 0 7px 0 6px; flex: none; }
.tg { width: 15px; height: 14px; margin-right: 2px; }
.sq { width: 24px; height: 23px; border: 1px solid #b5b5b5; border-radius: 3px; background: #fafafa; margin-left: 6px; display: grid; place-items: center; flex: none; }
.sq svg { width: 18px; height: 18px; }
.sq.eps { font: 22px/20px "Liberation Serif"; color: #5a3263; padding-bottom: 3px; }
.line label { width: 32px; flex: none; }
.value { width: 165px; height: 24px; background: #fff; padding: 0 7px 0 3px; flex: none; }
.value em { font: bold 9px "Open Sans"; color: #555; margin-right: 3px; }
.value span { border-right: 1px solid #bbb; margin-right: 4px; line-height: 22px; }
.ftabs { display: flex; height: 31px; margin-top: 6px; align-items: flex-end; }
.ftabs b { width: 48px; height: 29px; border: 1px solid #b5b5b5; border-left: 0; background: #e6e6e6; display: grid; place-items: center; font: bold 9px/12px "Open Sans"; color: #333; flex: none; }
.ftabs b.on { height: 31px; background: #fff; border-left: 1px solid #b5b5b5; border-bottom: 0; border-radius: 3px 3px 0 0; color: #111; }
.ftabs .two { font-weight: normal; align-content: center; white-space: nowrap; line-height: 9px; padding-bottom: 3px; gap: 0; }
.ftabs .two q { display: block; font-size: 8.500px; height: 9px; line-height: 9px; }
.ftabs .blue q { background: #7d9ff0; border-radius: 6px; padding: 0 2px; box-shadow: 0 0 2px #7d9ff0; }
.ftabs .halo q { background: #f0f4fc; border-radius: 6px; padding: 0 2px; box-shadow: 0 0 2px #9ab; }
.ftabs b.cut { width: 4px; border-right: 0; }
.sc { width: 16px; height: 31px; border: 1px solid #b5b5b5; border-radius: 2px; display: grid; place-items: center; background: #fafafa; margin-left: -1px; flex: none; }
.sc.lf::after { background: #999; }
.scroll { display: flex; height: 374px; margin-top: 10px; }
.form { width: 213px; overflow: hidden; }
.form .inp { display: block; flex: none; width: 180px; border: 1px solid #b0b0b0; border-radius: 3px; background: #fff; padding: 0 3px; }
.form .inp.gr { background: linear-gradient(#fefefe, #f1f1f1); }
.r { display: flex; align-items: center; }
.r label { width: 43px; flex: none; }
.text { height: 15px; }
.font { margin-top: 7px; height: 24px; } .font .inp { line-height: 22px; height: 24px; }
.style { margin-top: 14px; height: 23px; } .style .inp { height: 23px; line-height: 22px; }
.btns { margin: 9px 0 0 43px; height: 24px; gap: 9px; }
.btns b { width: 24px; height: 24px; border: 1px solid #b5b5b5; border-radius: 3px; background: #fafafa; font: 16px/21px "Open Sans"; text-align: center; flex: none; }
.btns .dis { color: #999; }
.btns svg { width: 24px; height: 19px; }
.size { margin-top: 9px; height: 20px; } .size .inp { height: 20px; line-height: 19px; padding-left: 5px; }
.pts { margin-top: 11px; height: 22px; } .pts .inp { height: 22px; line-height: 22px; }
.color { margin-top: 10px; height: 22px; } .color .inp { height: 22px; padding: 2px 4px; } .color i { display: block; height: 16px; background: #000; border-radius: 2px; }
.opac { margin-top: 11px; height: 20px; }
.slider { width: 118px; height: 20px; flex: none; margin-right: 4px; display: flex; justify-content: flex-end; align-items: center; background: linear-gradient(#aaa, #aaa) 1px 7px/105px 1px no-repeat, linear-gradient(#aaa, #aaa) 1px 11px/105px 1px no-repeat; }
.slider i { width: 13px; height: 13px; border: 1px solid #999; border-radius: 3px; background: #fff; }
.opac .pct { padding: 0 5px; height: 20px; line-height: 19px; white-space: nowrap; }
.html { margin-top: 11px; height: 16px; gap: 5px; letter-spacing: -.18px; }
.fav { width: 230px; height: 22px; margin-top: 14px; border: 1px solid #b0b0b0; border-radius: 3px; background: #fff; display: flex; align-items: center; padding-left: 11px; gap: 5px; }
.fav svg { width: 12px; height: 13px; }
.list { width: 230px; height: 51px; margin-top: 5px; border: 1px solid #b0b0b0; border-bottom: 0; background: #fff; }
.form .hsb { height: 14px; }
.scroll .vsb { width: 15px; height: 359px; border-bottom: 1px solid #bbb; }
.actions { display: flex; height: 23px; align-items: center; margin-top: 6px; letter-spacing: -.2px; }
.actions .sq:first-child { margin-left: 0; }
.flip svg { transform: scaleX(-1); }
.actions .sq svg { width: 14px; height: 14px; }
.actions .cb { margin: 0 4px 0 6px; }
.apply { width: 80px; height: 21px; margin-left: auto; border: 1px solid #aaa; border-radius: 3px; background: linear-gradient(#fefefe, #f2f2f2); text-align: center; line-height: 20px; }

.status { height: 27px; flex: none; display: flex; align-items: center; padding: 0 0 0 4px; white-space: nowrap; }
.status label { letter-spacing: -.1px; flex: none; }
.locate { width: 200px; height: 22px; border: 1px solid #aaa; border-radius: 3px; background: #fff; display: flex; align-items: center; gap: 8px; padding-left: 8px; color: #aaa; font-style: italic; flex: none; }
.locate svg { width: 12px; height: 12px; }
.field { height: 20px; border: 1px solid #b0b0b0; border-radius: 3px; background: #fff; line-height: 19px; padding-left: 5px; display: flex; flex: none; }
.co { width: 57px; margin-left: 76px; } .coord { width: 97px; } .bug { width: 15px; height: 15px; margin: 0 13px 0 4px; }
.sc-l { width: 29px; } .scale { width: 80px; padding-left: 4px; } .scale > i { width: 19px; margin-left: auto; border-left: 1px solid #bbb; display: grid; place-items: center; }
.lock { width: 12px; height: 15px; margin: 0 8px 0 12px; }
.mg { width: 49px; } .magn { width: 87px; } .status .ro { width: 59px; padding-left: 9px; } .rot { width: 83px; }
.spin { width: 13px; margin-left: auto; border-left: 1px solid #bbb; display: grid; place-content: center; gap: 4px; }
.spin::before, .spin::after { content: ""; width: 7px; height: 4px; background: #555; clip-path: polygon(50% 0, 100% 100%, 0 100%); }
.spin::after { transform: scaleY(-1); }
.status > .cb { margin: 0 4px 0 8px; } .re { width: 54px; } .globe { width: 15px; height: 15px; } .ep { width: 82px; padding-left: 3px; } .chat { width: 17px; height: 16px; }
.sizegrip { width: 11px; height: 11px; margin: 12px 2px 0 auto; background: radial-gradient(circle, #aaa 0 .7px, transparent .9px) 0 0/3.600px 3.600px; clip-path: polygon(100% 0, 100% 100%, 0 100%); }

.dialog { position: absolute; left: 387px; top: 395px; width: 456px; height: 218px; border: 1px solid #20242c; border-radius: 6px; padding: 0 6px; background: linear-gradient(rgba(196,224,255,.4), rgba(165,205,252,.5)); backdrop-filter: blur(3px) brightness(.85) saturate(.85); box-shadow: 2px 3px 13px 2px rgba(0,0,0,.75), inset 0 0 0 1px rgba(255,255,255,.7); }
.dtitle { height: 28px; display: flex; align-items: center; font-size: 12px; letter-spacing: -.27px; }
.dtitle span { padding: 0 6px 0 0; text-shadow: 0 0 5px #fff, 0 0 8px #fff, 0 0 10px #fff; }
.dtitle svg { width: 16px; height: 16px; margin: 0 5px 0 1px; }
.close { width: 47px; height: 19px; margin-left: auto; align-self: flex-start; border: 1px solid #5c2020; border-top: 0; border-radius: 0 0 4px 4px; background: linear-gradient(#e9a79b, #d16353 48%, #b52b18 50%, #d2644a); display: grid; place-items: center; }
.close svg { width: 12px; height: 10px; margin: 0; }
.dbody { height: 182px; border: 1px solid #6b7480; background: #f0f0f0; padding: 9px 11px; box-shadow: 0 0 0 1px rgba(255,255,255,.5); }
.dbody p { margin: 0; white-space: nowrap; letter-spacing: -.29px; word-spacing: .2px; font-size: 11px; }
.dbody .combo { height: 22px; margin-top: 3px; padding: 0 7px 0 4px; }
.dbody p { letter-spacing: -.02px; }
.dbtns { display: flex; justify-content: flex-end; align-items: center; margin-top: 92px; height: 29px; }
.mark { border: 2px solid #e8191c; width: 93px; height: 29px; padding: 2px 4px 0 5px; }
.dbtns b { display: block; width: 80px; height: 22px; border: 1px solid #aaa; border-radius: 3px; background: linear-gradient(#fefefe, #f2f2f2); text-align: center; line-height: 20px; }
.dbtns .ok { border-color: #4a94e0; background: linear-gradient(#fbfdff, #e6edf6); }
.ring { position: absolute; left: 860px; top: 84px; width: 72px; height: 64px; }
.cursor { position: absolute; left: 789px; top: 116px; width: 13px; height: 18px; }
```

FILE: app.js
```js
const use = (id, cls = '') => `<svg class="${cls}"><use href="#${id}"/></svg>`;

/* Toolbars */
document.querySelectorAll('.toolbar').forEach(bar => {
  bar.innerHTML = bar.dataset.tools.split(' ').map(t => {
    if (/^g\d?$/.test(t)) return `<i class="grip ${t}"></i>`;
    if (t === 's') return '<i class="sep"></i>';
    if (t === 'v') return '<i class="v"></i>';
    if (t === 'V') return '<i class="v dim"></i>';
    if (t === 'm1') return '<span class="more" style="width:33px;padding-left:14px">»</span>';
    if (/^m\d$/.test(t)) return `<span class="more" style="width:${{ m2: 14, m3: 24 }[t]}px">»</span>`;
    if (t === 'PEN') return `<span class="tool">${use('pen')}</span>`;
    if (t[0] === '*') return `<span class="tool on">${use('i-' + t.slice(1))}</span>`;
    return `<span class="tool">${use('i-' + t)}</span>`;
  }).join('');
});

/* Browser tree: indent, expander, icon, label */
const nodes = [
  [66, 'c', 'folder', 'landuse_buffer'], [66, 'c', 'folder', 'landuse_change'],
  [66, 'c', 'folder', 'landuse_mapping'], [66, 'c', 'folder', 'solid_waste_mapping'],
  [66, 'c', 'folder', 'solidwaste_allocation'], [66, 'c', 'folder', 'solidwaste_service_area'],
  [66, 'o', 'fopen', 'spatialplanning_walkability'], [86, 'o', 'db', 'walkability.gpkg'],
  [106, 'c', 'poly', 'COJ_Boundary'], [106, 'c', 'pt', 'places'],
  [106, 'c', 'line', 'roads'], [66, 'o', 'fopen', 'transportation_accessibility'],
  [86, '', 'poly', 'bangalore.geojson']
];
document.getElementById('browser').innerHTML = nodes.map(([x, e, ic, t]) =>
  `<li class="${t === 'roads' ? 'hl' : ''}" style="padding-left:${x}px"><i class="ex ${e}"></i>${use('i-' + ic, 'ic')}<span>${t}</span></li>`).join('');

/* Layer tree */
const cb = on => `<i class="cb">${on ? use('i-check') : ''}</i>`;
const classes = [['1 - 20', '#2c7bb6'], ['20 - 50', '#abd9e9'], ['50 - 80', '#ffffbf'], ['80 - 100', '#fdae61'], ['100+', '#d7191c']];
const off = (mark, t) => `<li style="padding-left:23px">${cb(0)}${mark}<span class="off">${t}</span></li>`;
document.getElementById('layers').innerHTML =
  `<li class="hl" style="padding-left:23px">${cb(1)}<i class="dot l" style="background:#b9dcf8"></i><span class="bold"><u>places</u></span></li>` +
  `<li style="padding-left:6px"><i class="ex o"></i><i style="width:9px"></i>${cb(1)}<svg style="width:16px;height:12px;margin-right:6px"><use href="#i-poly"/></svg><span class="bold">grid_counts_coj</span></li>` +
  classes.map(([t, c]) => `<li style="padding-left:43px">${cb(1)}<i class="sw" style="background:${c}"></i><span>${t}</span></li>`).join('') +
  off('<i class="sw b" style="background:#e3b434"></i>', 'grid_counts') +
  off('<i class="sw b" style="background:#e15989"></i>', 'grid') +
  off('<i class="dot" style="background:#b0c840"></i>', 'road_intersections_reprojected') +
  off('<i class="dot" style="background:#dc6b42"></i>', 'roads_line_intersections') +
  off('<i class="ln"></i>', 'roads_singleparts');

/* Density grid. Each entry: row, first column, cell classes */
const C = 9.067, X0 = 356, Y0 = 192.67;
const grid = [
  [0, 23, 'BBBB...B'], [1, 21, 'BBBBBB..LY'],
  [2, 19, 'BRBBBBBBBORRGBBBBBBY...BBBBB'],
  [3, 18, 'BBYBBBBBYRROLBBBBBBLBBBYLBBBB'],
  [4, 19, 'LBBBBBLBLBYLBBBBBBBRYYBYBBB'],
  [5, 18, 'BLBBGLLLLLLLBGBBBBLLYOYOYLLB'],
  [6, 18, 'BBBBBLBLOOROR' + 'BBBLBLOYRRRLBBB'],
  [7, 19, 'BBBBLBBROOOLLBLBLLLRRRYBBBB.BB'],
  [8, 20, 'LYBBBBRYRRLBBLLRYLLRRRLBLYYLRY'],
  [9, 20, 'LRBBBBRRRRYBBBBOYLYRRRYBLRRRRR'],
  [10, 20, 'BOBBBLRRORO' + 'LLBBYORRYRRLBLRRROB'],
  [11, 20, 'RLOLYYRRRRRBBBBRYYRRRYRLBRROB'],
  [12, 19, 'BORYLRRRRRRRRBBYYYORRYOLLBRYB'],
  [13, 19, 'BRYYYOYOOYRRROLRRRLLLLLLLLOY'],
  [14, 18, 'BYYLLORYLRLRRYORRRRLYBBBRLYLLB'],
  [15, 18, 'LYYBBRROYRLRRLYRRBLRRLBBYYL'],
  [16, 13, 'BBBBBRYRBRRRRYLYYRLLYRYRRYLBBGBBB'],
  [17, 13, 'BBBBBYLYBRRYOLLBORBLYRORRYYBBBLB'],
  [18, 12, 'BBLBLBLLYYRYRRLYLRORYLRYYLBLLYBYBG'],
  [19, 12, 'BBLYBBOYRRRYRRLYORRRORRYOYLRLBBBBLB'],
  [20, 12, 'BBYRORROO' + 'YRORROYLYRLORRYRRRRRBLBLBLB'],
  [21, 12, 'YLLRRRRRRRRYYOYRRRLYYRRRORRRLYOOYL'],
  [22, 11, 'LBLLLRRRRYLYOLRRYRRLRYRRRLRRRLYRYB'],
  [23, 12, 'LLYLRRRRRLORRRLYRRRRLLRRRRRRLBRRLBB'],
  [24, 12, 'LLLLRRLRLLLLLRRRRRRLLBLRRRRRRLLRRLBB'],
  [25, 12, 'YLLLLLLLLLOLLORLYRLORLBYRLRLBBLY'],
  [32, 0, 'B'], [33, 0, 'BBGG'], [34, 0, 'BBGG'], [35, 0, 'BBBG'], [36, 0, 'BBBB'],
  [37, 0, 'BBGG'], [38, 2, 'BB'], [39, 3, 'B'], [40, 3, 'B'],
  [45, 10, 'LYBLRLBBBBBBBBBLBBLBBBB'],
  [46, 10, 'LYLYRLBGBLBGBBBGBBLBBBBGB'],
  [47, 10, 'BLLOROBBBBBBBBGRLBBBGGGGB'],
  [48, 9, 'BBGBLLLYYBBBBB..BLBBBBBB.B'],
  [49, 3, 'B.....BBRBBBYYBGGBB.B....B...B'],
  [50, 3, 'BGBBLBBBBBGGGBLB...B'],
  [51, 3, 'BGBYRRLGBBLBYYL'],
  [52, 4, 'GGLROYBBYRLLOB'], [53, 4, 'GGLYLYOBYLLYRB'],
  [54, 4, 'BBBBBLOYLLYRRBBBBB'], [55, 4, 'GBGGGLROLOYRRORLBB'],
  [56, 5, 'BGBBOYLLYRYBORB'], [57, 8, 'BLOLLRRYOOYBB'],
  [58, 8, 'GGGBGLRORLLBB'], [59, 8, 'BGBBBOYBBB.B']
];
const fill = { B: '#2c7bb6', L: '#abd9e9', Y: '#ffffbf', O: '#fdae61', R: '#d7191c', G: '#989898' };
const boundary = ['590,194 597,190 603,197', '636,199 648,215 636,222', '765,213 776,208 777,215', '522,238 532,230 532,242',
  '530,316 521,322 530,322', '764,346 773,349 769,356 777,364 764,366', '462,370 468,372 468,379',
  '355,486 365,488 392,496 392,555 384,573 378,573 379,560 385,553 380,520 356,511', '352,501 360,500 357,513',
  '438,620 450,625 450,635', '386,649 400,650 450,660 450,734 416,734 423,717 414,706 392,706',
  '567,615 583,622 583,624 574,624 568,628 567,641 560,641 536,645 520,657 518,640 556,636',
  '673,612 683,612 682,622 673,625', '627,618 664,618 664,629 655,637 650,638',
  '537,701 549,701 547,712 537,712', '519,730 527,728 527,734 519,734'];
let s = boundary.map(p => `<polygon points="${p}" fill="#989898"/>`).join('');
for (const [r, c, cells] of grid) [...cells].forEach((k, i) => {
  if (k !== '.') s += `<rect x="${(X0 + (c + i) * C).toFixed(2)}" y="${(Y0 + r * C).toFixed(2)}" width="9.07" height="9.07" fill="${fill[k]}"${k === 'G' ? '' : ' stroke="#7d9aad" stroke-opacity=".3" stroke-width=".7"'}/>`;
});
for (const [x, y] of [[757, 243], [736, 294], [631, 301], [575, 311], [616, 384], [666, 383]])
  s += `<circle cx="${x}" cy="${y}" r="5.700" fill="#fff" stroke="#333" stroke-width="1.100"/>`;
for (const [t, x, y, w] of [['Midrand', 736, 290, 46], ['Fourways', 631, 298, 55], ['Kaya Sands', 542, 308, 66], ['Randburg', 589, 380, 55], ['Sandton', 666, 379, 48]])
  s += `<text x="${x}" y="${y}" textLength="${w}" lengthAdjust="spacingAndGlyphs">${t}</text>`;
document.getElementById('map').innerHTML = s;
```
